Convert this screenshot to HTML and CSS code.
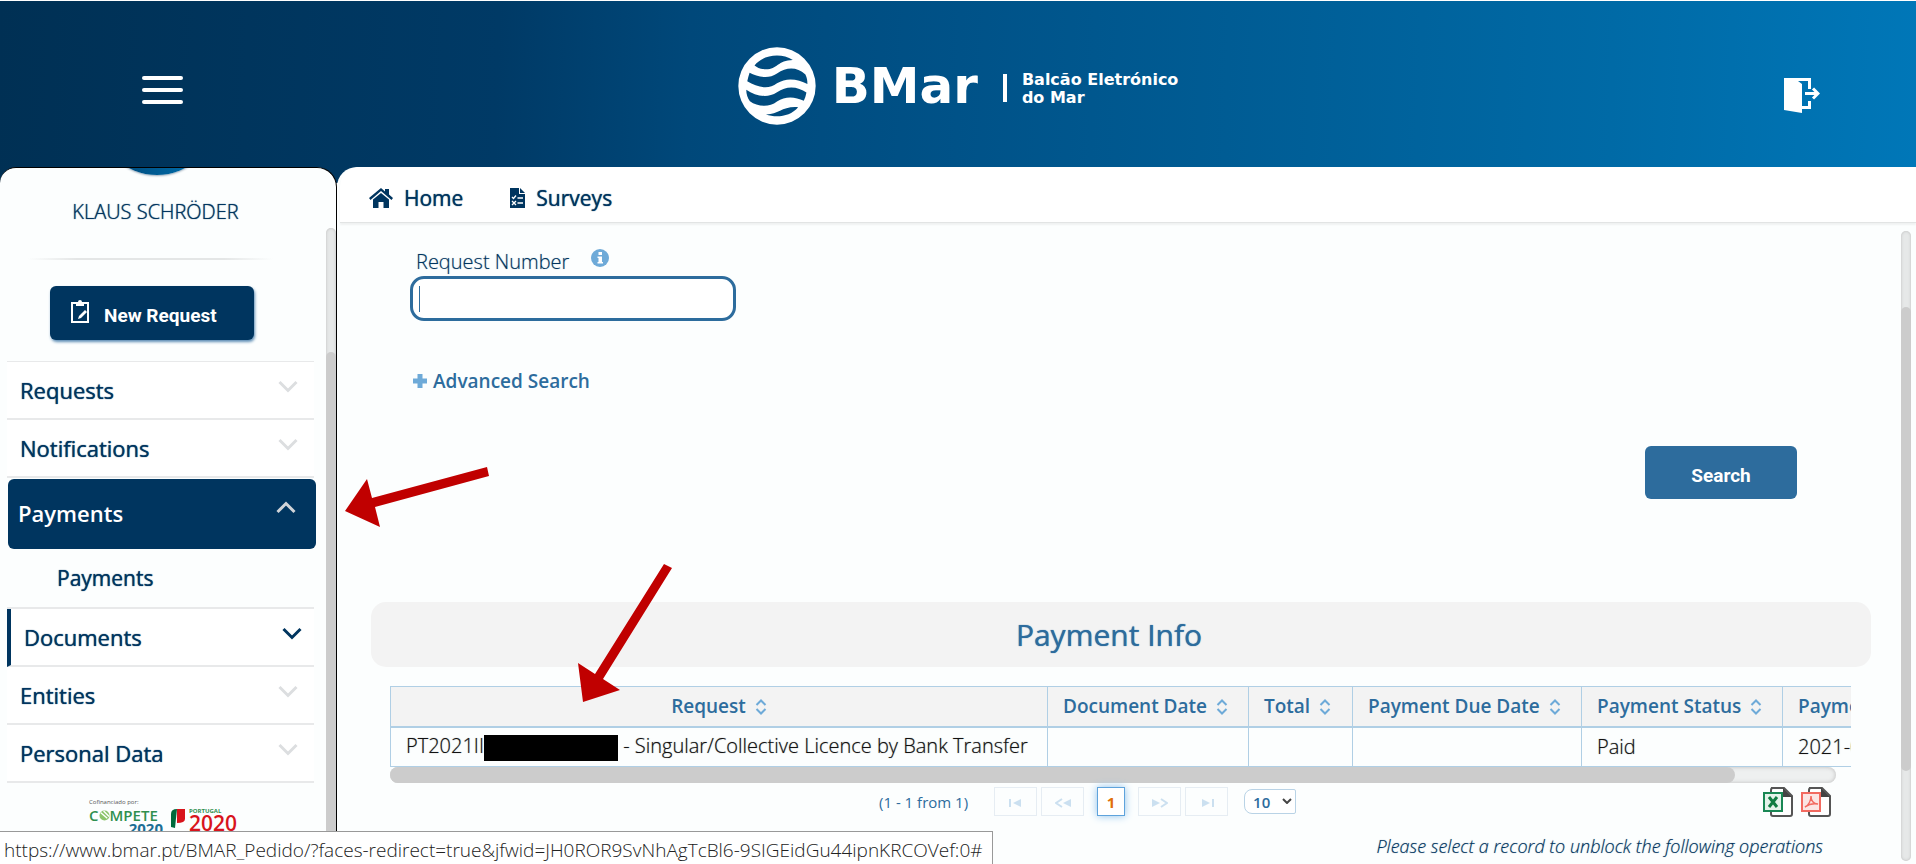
FILE: index.html
```html
<!DOCTYPE html>
<html lang="en">
<head>
<meta charset="utf-8">
<title>BMar - Payments</title>
<link rel="stylesheet" href="styles.css">
</head>
<body>
<svg class="defs" aria-hidden="true">
  <symbol id="chev" viewBox="0 0 20 13"><path d="M1.500 2l8.500 8.500L18.500 2" fill="none" stroke="currentColor" stroke-width="3"/></symbol>
  <symbol id="sort" viewBox="0 0 12 16"><path d="M1.500 6L6 1.500 10.500 6M1.500 10L6 14.500 10.500 10" fill="none" stroke="currentColor" stroke-width="2"/></symbol>
</svg>
<header class="top">
  <button class="burger" aria-label="Menu"><span></span><span></span><span></span></button>
  <div class="logo">
    <svg class="globe" viewBox="107 80 236 236" aria-hidden="true"><path fill="#fff" fill-rule="evenodd" d="M225 81a117 117 0 1 1 0 234a117 117 0 1 1 0-234ZM157 136C165 142 172 147 187 147C225 150 225 120 273 119C235 95 180 105 157 136ZM142 158C165 170 200 178 225 160C255 140 285 140 311 163C316 175 317 180 317 192C290 178 255 170 225 190C200 210 165 202 135 184C137 175 139 166 142 158ZM132 209C160 228 195 237 225 217C255 195 290 200 314 218C312 228 310 235 306 243C280 230 250 228 225 245C200 265 165 260 143 244C136 234 132 222 132 209ZM191 284C230 285 240 258 289 262C265 290 225 295 191 284Z"/></svg>
    <span class="brand">BMar</span>
    <span class="bar"></span>
    <span class="tagline">Balcão Eletrónico<br>do Mar</span>
  </div>
  <button class="exit" aria-label="Log out">
    <svg viewBox="0 0 36 36" width="36" height="36" aria-hidden="true"><path d="M0 1h27v11h-3V4H14l4 3v22h6v-5h3v8h-9v4L0 33z" fill="#fff"/><path d="M21 16.500h12M29 11.500l5 5-5 5" fill="none" stroke="#fff" stroke-width="3"/></svg>
  </button>
</header>
<div class="body">
  <aside class="side">
    <div class="side-in">
      <div class="avatar"><span></span></div>
      <div class="user">KLAUS SCHRÖDER</div>
      <div class="rule"></div>
      <button class="new">
        <svg viewBox="0 0 18 24" width="18" height="24" aria-hidden="true"><path d="M1 4h16v19H1z" fill="none" stroke="#fff" stroke-width="2"/><path d="M5 3h2a2 2 0 0 1 4 0h2v4H5z" fill="#fff"/><path d="M7 20l1-3 6-6 2 2-6 6z" fill="#fff"/></svg>
        New Request</button>
      <nav class="menu">
        <a href="#">Requests<svg class="chev"><use href="#chev"/></svg></a>
        <a href="#">Notifications<svg class="chev"><use href="#chev"/></svg></a>
        <a href="#" class="open">Payments<svg class="chev up"><use href="#chev"/></svg></a>
        <a href="#" class="sub">Payments</a>
        <a href="#" class="hover">Documents<svg class="chev"><use href="#chev"/></svg></a>
        <a href="#">Entities<svg class="chev"><use href="#chev"/></svg></a>
        <a href="#">Personal Data<svg class="chev"><use href="#chev"/></svg></a>
      </nav>
      <div class="funding">
        <small>Cofinanciado por:</small>
        <div class="funds">
          <div class="compete"><b>C<svg viewBox="0 0 12 12" width="11" height="11" aria-hidden="true"><circle cx="6" cy="6" r="5.500" fill="#8cc56b"/><path d="M2 3l7 6M5 1l6 6" stroke="#fff" stroke-width="1.500"/></svg>MPETE</b><i>2020</i></div>
          <svg viewBox="0 0 14 20" width="14" height="20" aria-hidden="true"><path d="M0 19V6q0-5 6-5L4 20z" fill="#00693c"/><path d="M6 1h8v10q0 4-8 4z" fill="#d8141c"/></svg>
          <div class="pt"><small>PORTUGAL</small><b>2020</b></div>
        </div>
      </div>
    </div>
    <div class="track"><span></span></div>
  </aside>
  <main class="main">
    <nav class="crumbs">
      <a href="#"><svg viewBox="0 0 24 20" width="24" height="20" aria-hidden="true"><path d="M0 10L12 0l4 3.400V1h4v5.500l4 3.500-1.500 2L12 3 1.500 12z" fill="currentColor"/><path d="M4 11.500L12 5l8 6.500V20h-5.500v-6h-5v6H4z" fill="currentColor"/></svg>Home</a>
      <a href="#"><svg viewBox="0 0 15 20" width="15" height="20" aria-hidden="true"><path d="M0 0h9v6h6v14H0z" fill="currentColor"/><path d="M10 0l5 5h-5z" fill="currentColor"/><path d="M2 9l1.500 1.500L6 7.500M2 13l4 4M6 13l-4 4M7.500 10H13M7.500 15H13" stroke="#fff" stroke-width="1.300" fill="none"/></svg>Surveys</a>
    </nav>
    <div class="content">
      <form class="search">
        <div class="label"><label for="num">Request Number</label>
          <svg viewBox="0 0 18 18" width="18" height="18" aria-hidden="true"><circle cx="9" cy="9" r="9" fill="#6eaad8"/><path d="M7.500 3h3.500v3H7.500zM6.500 7.500H11V13h1v1.500H6.500V13h1V9h-1z" fill="#fff"/></svg></div>
        <div class="field"><input id="num" type="text"><span class="caret"></span></div>
        <a href="#" class="adv"><svg viewBox="0 0 14 14" width="14" height="14" aria-hidden="true"><path d="M7 0v14M0 7h14" stroke="#6eaad8" stroke-width="5"/></svg>Advanced Search</a>
        <button type="button" class="go">Search</button>
      </form>
      <h1>Payment Info</h1>
      <div class="results">
        <div class="scroll">
          <table>
            <colgroup><col class="c1"><col class="c2"><col class="c3"><col class="c4"><col class="c2"><col class="c2"></colgroup>
            <thead><tr>
              <th class="mid">Request<svg><use href="#sort"/></svg></th><th>Document Date<svg><use href="#sort"/></svg></th><th>Total<svg><use href="#sort"/></svg></th><th>Payment Due Date<svg><use href="#sort"/></svg></th><th>Payment Status<svg><use href="#sort"/></svg></th><th>Payment Date</th>
            </tr></thead>
            <tbody><tr>
              <td>PT2021II<span class="redact"></span> - Singular/Collective Licence by Bank Transfer</td><td></td><td></td><td></td><td>Paid</td><td>2021-09</td>
            </tr></tbody>
          </table>
        </div>
        <div class="hbar"><span></span></div>
        <div class="pager">
          <span class="count">(1 - 1 from 1)</span>
          <button disabled aria-label="First"><svg viewBox="0 0 16 10"><path d="M1 1h2v8H1zM13 1v8L5 5z"/></svg></button>
          <button disabled aria-label="Previous"><svg viewBox="0 0 16 10"><path d="M16 1v8L8 5z"/><path d="M7 1L1 5l6 4" fill="none" stroke="currentColor" stroke-width="2"/></svg></button>
          <button class="cur">1</button>
          <button disabled aria-label="Next"><svg viewBox="0 0 16 10"><path d="M0 1v8l8-4z"/><path d="M9 1l6 4-6 4" fill="none" stroke="currentColor" stroke-width="2"/></svg></button>
          <button disabled aria-label="Last"><svg viewBox="0 0 16 10"><path d="M3 1v8l8-4zM13 1h2v8h-2z"/></svg></button>
          <div class="size"><select aria-label="Rows per page"><option>10</option></select><svg viewBox="0 0 10 6"><path d="M1 1l4 4 4-4" fill="none" stroke="#444" stroke-width="2"/></svg></div>
          <div class="exports">
            <button aria-label="Export to Excel"><svg viewBox="0 0 30 30"><path d="M8 1h13l8 8v18q0 2-2 2H10q-2 0-2-2V3q0-2 2-2z" fill="#fff" stroke="#555" stroke-width="2"/><path d="M20 1l9 9h-9z" fill="#444"/><path d="M1 6h18v18H1z" fill="#e4f3ea" stroke="#198754" stroke-width="2"/><path d="M6 10l8 10M14 10L6 20" stroke="#107c41" stroke-width="3"/></svg></button>
            <button aria-label="Export to PDF"><svg viewBox="0 0 30 30"><path d="M8 1h13l8 8v18q0 2-2 2H10q-2 0-2-2V3q0-2 2-2z" fill="#fff" stroke="#555" stroke-width="2"/><path d="M20 1l9 9h-9z" fill="#444"/><path d="M1 6h18v18H1z" fill="#fbe5e3" stroke="#f26a60" stroke-width="2"/><path d="M4 20c4-2 6-7 6-11 0 5 3 8 7 8-5-1-9 0-13 3z" fill="none" stroke="#f26a60" stroke-width="1.500"/></svg></button>
          </div>
        </div>
        <p class="hint">Please select a record to unblock the following operations</p>
      </div>
    </div>
    <div class="track"><span></span></div>
  </main>
</div>
<svg class="arrow a1" viewBox="0 0 145 60" aria-hidden="true"><path d="M0 44L22 12 27 31 142 0 144 9 30 40 35 60z" fill="#c00000"/></svg>
<svg class="arrow a2" viewBox="0 0 94 138" aria-hidden="true"><path d="M5 138L0 99 17 110 86 0 94 4 25 115 42 126z" fill="#c00000"/></svg>
<div class="status">https://www.bmar.pt/BMAR_Pedido/?faces-redirect=true&amp;jfwid=JH0ROR9SvNhAgTcBl6-9SIGEidGu44ipnKRCOVef:0#</div>
</body>
</html>
```
FILE: styles.css
```css
* { box-sizing: border-box; }
body {
  margin: 0; height: 100vh; overflow: hidden; position: relative;
  display: flex; flex-direction: column;
  font-family: "Open Sans", sans-serif; font-size: 20px; line-height: 28px;
  color: #00355f; background: #fff; padding-top: 1px;
}
button { border: 0; padding: 0; background: none; font: inherit; color: inherit; }
a { color: inherit; text-decoration: none; }
.defs { position: absolute; width: 0; height: 0; }

.top {
  flex: none; height: 182px; margin-bottom: -16px; padding: 0 96px 16px;
  background: linear-gradient(92deg, #003054, #003a66 26%, #00487a 36%, #005288 50%, #005c94 64%, #006aa6 84%, #0077b8);
  display: grid; grid-template-columns: 1fr auto 1fr; align-items: center;
}
.burger { width: 41px; margin-left: 46px; display: flex; flex-direction: column; gap: 8px; padding-top: 12px; }
.burger span { height: 4px; border-radius: 2px; background: #fff; }
.logo { display: flex; align-items: center; color: #fff; font-family: "DejaVu Sans", sans-serif; font-weight: 700; padding-top: 3px; }
.globe { width: 78px; height: 78px; margin-right: 16px; }
.brand { font-size: 50px; line-height: 56px; }
.bar { width: 4px; height: 28px; background: #fff; margin: 4px 15px 0 25px; }
.tagline { font-size: 16px; line-height: 18px; padding-top: 6px; }
.exit { justify-self: end; height: 36px; margin-top: 22px; }

.body { flex: 1; min-height: 0; display: flex; }
.side {
  flex: none; width: 337px; background: #fcfefe; border: 1px solid #000; border-width: 1px 1px 0 0;
  border-radius: 16px 20px 0 0; overflow: hidden; display: flex;
}
.side-in { flex: 1; overflow: hidden; display: flex; flex-direction: column; }
.avatar { flex: none; height: 7px; margin-left: 97px; display: flex; align-items: flex-end; width: 120px; }
.avatar span { flex: none; width: 120px; height: 120px; border-radius: 50%; background: linear-gradient(90deg, #00406e, #0077b8); box-shadow: 0 1px 2px #9ab; }
.user { margin: 21px 15px 30px 0; text-align: center; font-weight: 350; line-height: 32px; text-shadow: 0 0 1px; }
.rule { margin: 0 53px 26px 28px; height: 2px; background: linear-gradient(90deg, transparent, #e4e6e6 20%, #e4e6e6 80%, transparent); }
.new {
  flex: none; width: 204px; height: 54px; margin-left: 50px; border-radius: 6px; background: #00355f; color: #fff;
  display: flex; align-items: center; gap: 15px; padding: 6px 20px 0 21px;
  font: 700 19px/24px Roboto, sans-serif; box-shadow: 1px 2px 3px #5d8db5;
}
.new svg { margin-bottom: 10px; }
.menu { margin: 21px 12px 0 7px; border-top: 1px solid #e8e9ea; font-weight: 500; font-size: 22px; text-shadow: 0 0 1px; }
.menu a { display: flex; height: 58px; align-items: center; justify-content: space-between; padding: 0 16px 0 13px; border-bottom: 2px solid #e8e9ea; background: #fff; }
.chev { width: 20px; height: 13px; color: #dcdee0; margin-bottom: 8px; }
.menu .open { height: 70px; margin: 1px -2px 4px 1px; padding: 0 16px 2px 10px; border: 0; border-radius: 6px; background: #00355f; color: #fff; font-weight: 600; text-shadow: none; }
.menu .open .chev { transform: rotate(180deg); color: #d0d4d8; margin-right: 4px; margin-bottom: 12px; }
.menu .sub { font-size: 21px; padding-left: 50px; height: 56px; background: none; padding-bottom: 4px; }
.menu .hover { border-left: 4px solid #00355f; padding: 0 12px 0 13px; }
.menu .hover .chev { color: #00355f; }
.funding { margin: 13px 0 0 89px; color: #555; }
.funding small { display: block; font-size: 6px; line-height: 12px; }
.funds { display: flex; gap: 4px; }
.funds > svg { margin-left: 4px; }
.compete { width: 74px; color: #2f8f4e; font-size: 15px; line-height: 14px; }
.compete b { display: flex; align-items: center; font-weight: 600; }
.compete i { display: block; text-align: right; font-style: normal; font-weight: 700; color: #1d6f95; line-height: 12px; }
.funding .pt small { line-height: 6px; color: #2f8f4e; font-weight: 700; }
.pt b { display: block; font-size: 21px; line-height: 18px; color: #d8141c; font-weight: 600; }

.track { flex: none; width: 10px; border-radius: 5px; background: #e6e8e8; box-shadow: inset 0 0 3px #bbb; }
.track span { display: block; background: #ccc; border-radius: 5px; }
.side .track { margin-top: 60px; }
.side .track span { margin-top: 124px; height: 100%; }

.main { flex: 1; min-width: 0; position: relative; background: #fcfefe; border-radius: 20px 0 0 0; display: flex; flex-direction: column; }
.crumbs { height: 56px; flex: none; background: #fff; border-bottom: 1px solid #e2e4e4; box-shadow: 0 2px 2px #f0f2f2; display: flex; gap: 47px; padding: 6px 29px 0; font-size: 21px; font-weight: 500; text-shadow: 0 0 1px; border-radius: 20px 0 0 0; margin-left: 3px; }
.crumbs a { display: flex; align-items: center; gap: 11px; }
.main .track { position: absolute; right: 5px; top: 64px; bottom: 3px; }
.main .track span { margin-top: 76px; height: 464px; }
.content { padding: 20px 45px 0 34px; }
.search { display: flex; flex-direction: column; align-items: flex-start; padding-left: 39px; }
.label { display: flex; gap: 22px; padding: 6px 6px 1px; line-height: 26px; font-weight: 300; text-shadow: 0 0 1px #00355f80; }
.field { position: relative; }
.field input { display: block; width: 326px; height: 45px; border: 3px solid #2d6c9d; border-radius: 14px; padding: 0 9px; font: inherit; background: #fff; }
.caret { position: absolute; left: 9px; top: 10px; width: 1px; height: 26px; background: #2d6c9d; }
.adv { display: flex; align-items: center; gap: 6px; margin: 46px 0 0 3px; font-weight: 600; color: #2d6c9d; font-size: 19px; }
.go { align-self: flex-end; width: 152px; height: 53px; margin: 51px 74px 0 0; padding-top: 6px; border-radius: 6px; background: #2d6c9d; color: #fff; font: 700 19px/24px Roboto, sans-serif; }
h1 { margin: 103px 0 19px; height: 65px; padding: 0 24px 0 0; border-radius: 15px; background: #f3f3f3; color: #2d6c9d; font-size: 30px; line-height: 66px; font-weight: 500; text-align: center; text-shadow: 0 0 1px; }
.results { padding: 0 20px 0 19px; }
.scroll { overflow: hidden; }
table { table-layout: fixed; border-collapse: collapse; width: 1592px; }
.c1 { width: 657px; } .c2 { width: 201px; } .c3 { width: 104px; } .c4 { width: 229px; }
th, td { height: 40px; padding: 0 15px; border: 1px solid #b0cfe5; text-align: left; white-space: nowrap; line-height: 26px; }
th { background: #f3f3f3; color: #2d6c9d; font-weight: 600; font-size: 19px; border-bottom-width: 2px; }
th svg { width: 12px; height: 16px; margin-left: 9px; color: #6eaad8; vertical-align: -2px; }
.mid { text-align: center; }
td { color: #111; font-size: 20px; font-weight: 300; text-shadow: 0 0 1px #1118; }
.redact { display: inline-block; width: 134px; height: 26px; background: #000; vertical-align: middle; }
.hbar { height: 16px; margin-right: 15px; border-radius: 8px; background: #eef0f0; box-shadow: inset 0 0 4px #bbb; }
.hbar span { display: block; width: 93%; height: 100%; border-radius: 8px; background: #ccc; }
.pager { display: flex; align-items: center; gap: 4px; padding: 1px 20px 0 489px; height: 36px; color: #2d6c9d; font-size: 15px; }
.count { margin-right: 22px; }
.pager > button { width: 43px; height: 29px; border: 1px solid #e6edf3; color: #cbe0f0; }
.pager > button svg { width: 16px; height: 10px; fill: currentColor; }
.pager > .cur { width: 28px; margin: 0 9px; border: 1px solid #5ea3dc; color: #e17009; font-weight: 700; background: #fff; box-shadow: 0 0 8px #8fc2ec; }
.size { position: relative; margin-left: 12px; }
.size select { display: block; appearance: none; width: 52px; height: 25px; padding: 0 8px; border: 1px solid #b9d3e6; border-radius: 8px 2px 2px 8px; background: #fff; color: #2d6c9d; font: 600 15px/20px "Open Sans", sans-serif; }
.size svg { position: absolute; right: 4px; top: 9px; width: 10px; height: 6px; }
.exports { margin-left: auto; display: flex; gap: 8px; }
.exports button { height: 30px; }
.exports svg { display: block; width: 30px; height: 30px; }
.hint { margin: 13px 28px 0; text-align: right; font-style: italic; font-weight: 300; font-size: 18px; line-height: 28px; text-shadow: 0 0 1px #00355f80; }

.arrow { position: absolute; }
.a1 { left: 345px; top: 467px; width: 145px; height: 60px; }
.a2 { left: 578px; top: 564px; width: 94px; height: 138px; }
.status { position: absolute; left: 0; bottom: 0; height: 33px; padding: 4px 9px 0 4px; border: 1px solid #999; border-width: 1px 1px 0 0; background: #fff; color: #222; font-size: 19px; font-weight: 350; line-height: 28px; }
```
